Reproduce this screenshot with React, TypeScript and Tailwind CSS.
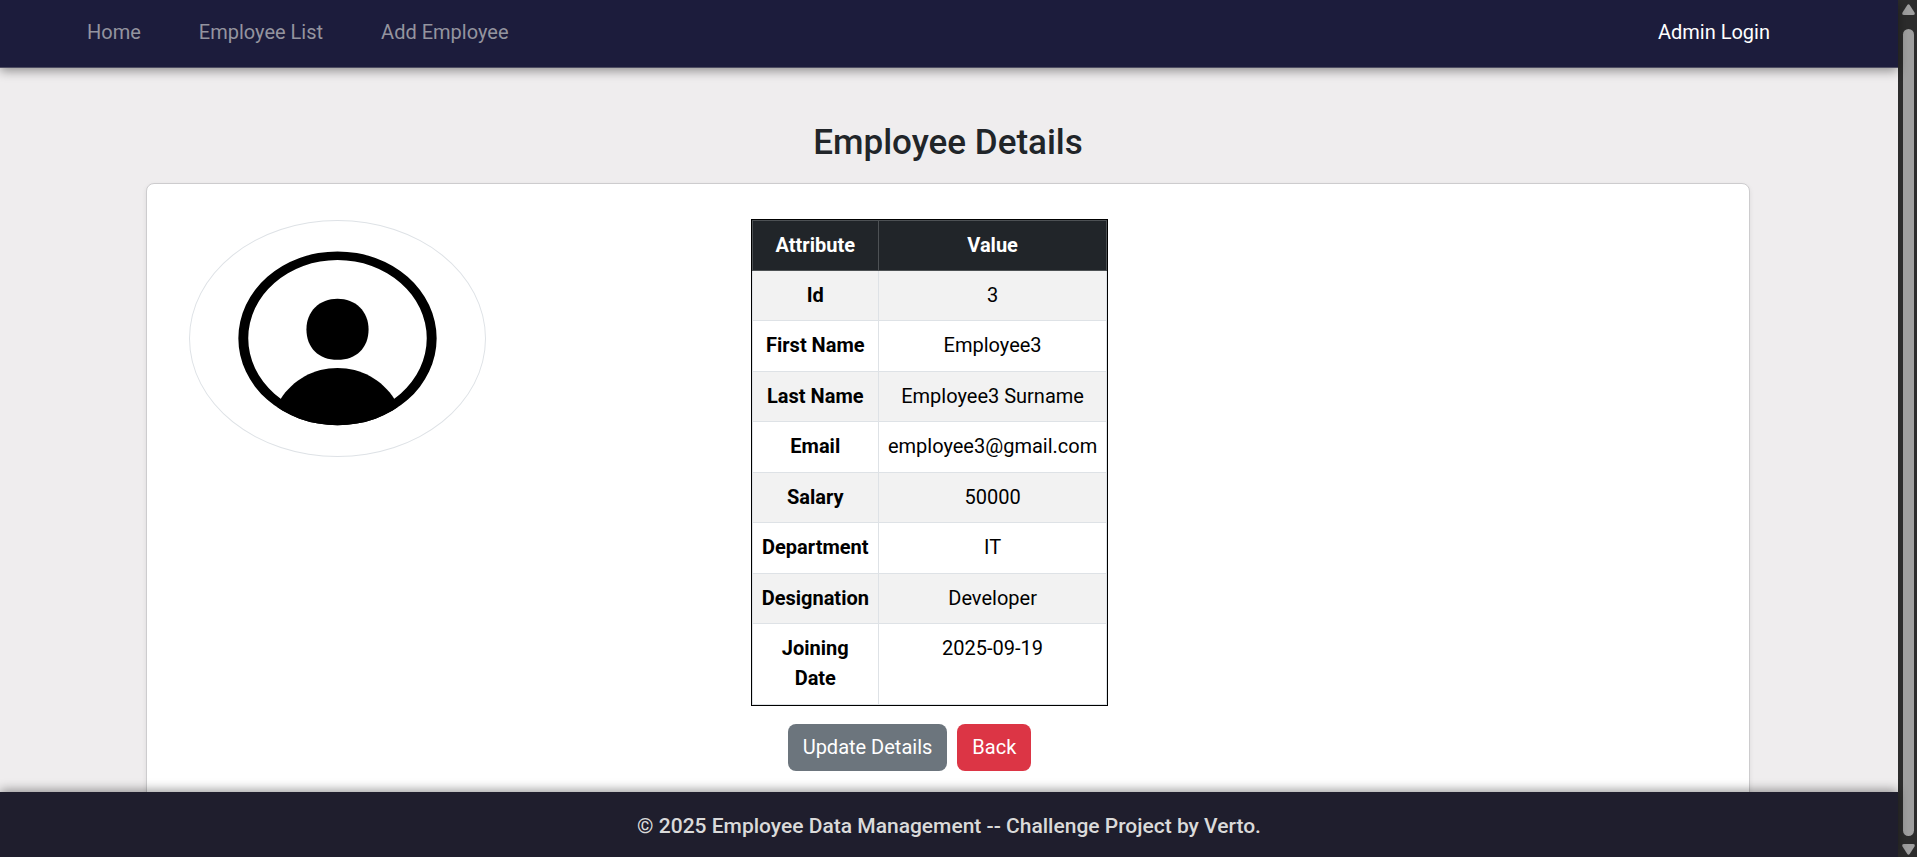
const details: [string, string][] = [
  ["Id", "3"],
  ["First Name", "Employee3"],
  ["Last Name", "Employee3 Surname"],
  ["Email", "employee3@gmail.com"],
  ["Salary", "50000"],
  ["Department", "IT"],
  ["Designation", "Developer"],
  ["Joining Date", "2025-09-19"],
];

function NavBar() {
  return (
    <header className="relative z-10 flex h-[68px] shrink-0 items-center justify-between border-b border-[#4f4e63] bg-[#1c1c3c] pr-[128px] pb-[3px] pl-[87px] shadow-[0_3px_10px_rgba(0,0,0,0.4)]">
      <nav className="flex gap-[58px] text-[#94949f]">
        <a href="#home">Home</a>
        <a href="#employees">Employee List</a>
        <a href="#add">Add Employee</a>
      </nav>
      <a href="#login" className="text-white">
        Admin Login
      </a>
    </header>
  );
}

function Avatar() {
  return (
    <div className="h-[237px] w-[297px] overflow-hidden rounded-[50%] border border-[#dee2e6] bg-white">
      <svg viewBox="0 0 890 711" className="h-full w-full" role="img" aria-label="Employee photo">
        <defs>
          <clipPath id="ring">
            <ellipse cx="445" cy="355" rx="300" ry="263" />
          </clipPath>
        </defs>
        <path
          fillRule="evenodd"
          d="M145 355a300 263 0 1 0 600 0a300 263 0 1 0-600 0zM175 355a270 237 0 1 1 540 0a270 237 0 1 1-540 0z"
        />
        <path d="M445 235c54 0 94 37 94 93 0 55-37 92-94 92s-94-37-94-92c0-56 40-93 94-93z" />
        <path
          clipPath="url(#ring)"
          d="M272 540C310 480 374 445 445 445s135 35 173 95l30 80H242z"
        />
      </svg>
    </div>
  );
}

function DetailsTable() {
  return (
    <table className="h-[487px] w-[357px] border-separate border-spacing-0 border border-black text-center text-black">
      <thead>
        <tr className="bg-[#212529] text-white">
          <th className="w-[127px] border border-[#4d5154] px-[9px] pt-[9px] pb-[10px] font-bold">Attribute</th>
          <th className="border-y border-r border-[#4d5154] px-[9px] pt-[9px] pb-[10px] font-bold">Value</th>
        </tr>
      </thead>
      <tbody>
        {details.map(([name, value]) => (
          <tr key={name} className="align-top odd:bg-[#f2f2f2] even:bg-white">
            <th scope="row" className="border-x border-b border-[#dee2e6] px-[9px] pt-[9px] pb-[10px] font-bold">
              {name}
            </th>
            <td className="border-r border-b border-[#dee2e6] px-[9px] pt-[9px] pb-[10px]">{value}</td>
          </tr>
        ))}
      </tbody>
    </table>
  );
}

function ScrollTrack() {
  return (
    <div className="flex w-[19px] shrink-0 flex-col items-center justify-between bg-[#2c2c2c] pt-[4px] pb-[2px] pl-[2px]" aria-hidden="true">
      <svg viewBox="0 0 13 11" className="h-[11px] w-[13px] shrink-0" fill="#9f9f9f">
        <path d="M5.3 1Q6.5-.6 7.7 1L12.5 8.500Q13.500 11 11 11H2Q-.5 11 .5 8.500z" />
      </svg>
      <div className="mt-[14px] mb-[8px] w-[11px] flex-1 rounded-full bg-[#9f9f9f]" />
      <svg viewBox="0 0 13 11" className="h-[11px] w-[13px] shrink-0" fill="#9f9f9f">
        <path d="M5.300 10Q6.500 11.600 7.700 10L12.500 2.500Q13.500 0 11 0H2Q-.5 0 .5 2.500z" />
      </svg>
    </div>
  );
}

export default function App() {
  return (
    <div className="flex h-screen overflow-hidden bg-[#efedee] font-['Roboto',sans-serif] text-[20px] leading-[30px] text-[#212529]">
      <div className="flex min-w-0 flex-1 flex-col">
        <NavBar />
        <main className="min-h-0 flex-1 overflow-hidden pt-[54px] pr-[148px] pl-[146px]">
          <h1 className="mb-[19px] text-center text-[35px] leading-[42px] font-medium">Employee Details</h1>
          <section className="grid grid-cols-[37fr_63fr] rounded-[8px] border border-[#cdccce] bg-white px-[42px] pt-[35px] pb-[60px] shadow-[0_2px_5px_rgba(0,0,0,0.08)]">
            <div className="pt-px">
              <Avatar />
            </div>
            <div>
              <DetailsTable />
              <div className="mt-[18px] flex gap-[10px] pl-[37px] text-white">
                <button type="button" className="h-[47px] rounded-[8px] bg-[#6c757d] px-[15px] pb-[2px]">
                  Update Details
                </button>
                <button type="button" className="h-[47px] rounded-[8px] bg-[#dc3545] px-[15px] pb-[2px]">
                  Back
                </button>
              </div>
            </div>
          </section>
        </main>
        <footer className="relative z-10 flex h-[65px] shrink-0 items-center justify-center bg-[#1f1e2d] pt-[3px] text-center text-[21px] font-medium text-[#dadada] shadow-[0_-2px_10px_rgba(0,0,0,0.4)]">
          © 2025 Employee Data Management -- Challenge Project by Verto.
        </footer>
      </div>
      <ScrollTrack />
    </div>
  );
}
